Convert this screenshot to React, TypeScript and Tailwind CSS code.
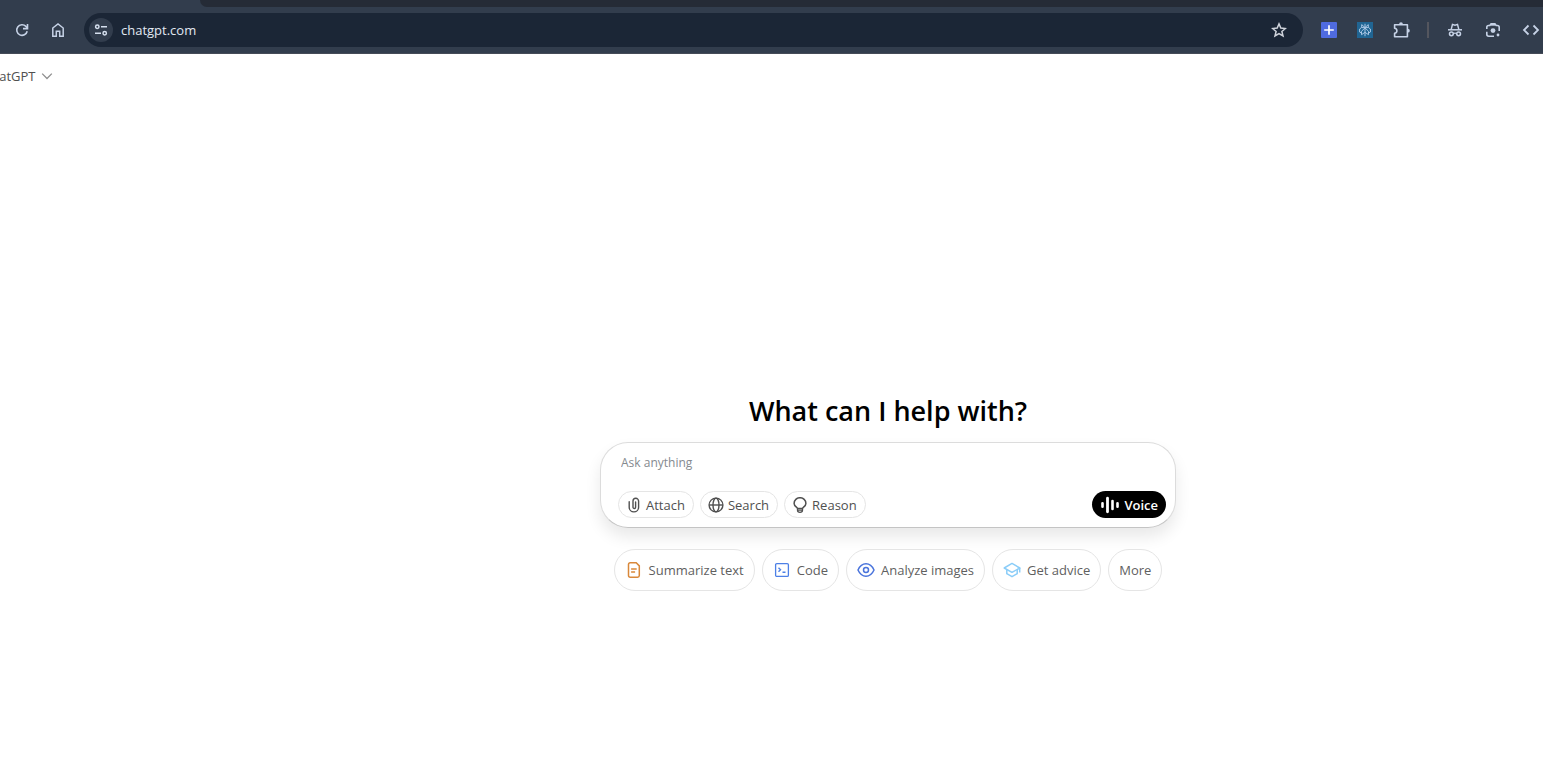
import type { ReactNode } from "react";

type IconProps = { className?: string };

const Svg = ({ size, box, className, children }: { size: number; box: string; className?: string; children: ReactNode }) => (
  <svg
    width={size}
    height={size}
    viewBox={box}
    fill="none"
    stroke="currentColor"
    className={`shrink-0 ${className ?? ""}`}
    aria-hidden="true"
  >
    {children}
  </svg>
);

const ReloadIcon = () => (
  <Svg size={16} box="0 0 16 16">
    <path d="M13.2 9.2A5.3 5.3 0 1 1 11.9 4.4L13.4 6" strokeWidth="1.6" />
    <path d="M13.5 2v4.6H9" strokeWidth="1.6" />
  </Svg>
);

const HomeIcon = () => (
  <Svg size={16} box="0 0 16 16">
    <path d="M2.8 6 8 2l5.2 4v8.2H9.7V9.3H6.3v4.9H2.8Z" strokeWidth="1.5" />
  </Svg>
);

const TuneIcon = () => (
  <Svg size={14} box="0 0 14 14">
    <circle cx="3.3" cy="3.8" r="1.7" strokeWidth="1.5" />
    <circle cx="10.7" cy="10.2" r="1.7" strokeWidth="1.5" />
    <path d="M7 3.8h6M1 10.2h6" strokeWidth="1.6" />
  </Svg>
);

const StarIcon = () => (
  <Svg size={16} box="0 0 16 16">
    <path d="m8 1.9 1.8 4.2 4.6.4-3.5 3 1.100 4.500L8 11.600 4 14l1.100-4.500-3.500-3 4.600-.4Z" strokeWidth="1.5" />
  </Svg>
);

const PuzzleIcon = () => (
  <Svg size={18} box="0 0 18 18">
    <path d="M2.600 3.700h12.800v12H2.600v-3.500c1.500-.2 2.300-1.100 2.300-2.500s-.8-2.300-2.300-2.500Z" strokeWidth="1.6" strokeLinejoin="round" />
    <path d="M7.100 3.200a1.900 1.900 0 0 1 3.800 0ZM15.900 7.800a1.900 1.900 0 0 1 0 3.800Z" fill="currentColor" stroke="none" />
  </Svg>
);

const IncognitoIcon = () => (
  <Svg size={16} box="0 0 16 16">
    <path d="M1 7.800h14" strokeWidth="1.5" />
    <path d="M4.200 7.400 5.500 2.400l2.500.7 2.500-.7 1.300 5" strokeWidth="1.5" />
    <circle cx="4.400" cy="11.800" r="1.900" strokeWidth="1.5" />
    <circle cx="11.600" cy="11.800" r="1.900" strokeWidth="1.5" />
    <path d="M6.300 11.500q1.700-.8 3.400 0" strokeWidth="1.300" />
  </Svg>
);

const LensIcon = () => (
  <Svg size={16} box="0 0 16 16">
    <path d="M1.800 7V5.200q0-1.700 1.700-1.700h1.300l1.300-1.700h3.800l1.300 1.700h1.300q1.700 0 1.700 1.700V9M1.800 9.700v2.600q0 1.900 1.900 1.900H9" strokeWidth="1.6" />
    <path d="M5.600 2.800h4.800" strokeWidth="1.800" />
    <circle cx="8" cy="8.600" r="2.400" fill="currentColor" stroke="none" />
    <circle cx="13" cy="13" r="1.400" fill="currentColor" stroke="none" />
  </Svg>
);

const BracketsIcon = () => (
  <Svg size={18} box="0 0 18 18">
    <path d="M6.500 4.500 2 9l4.500 4.500M11.500 4.500 16 9l-4.500 4.500" strokeWidth="1.800" />
  </Svg>
);

const PlusTile = () => (
  <Svg size={16} box="0 0 16 16">
    <rect width="16" height="16" rx="1" fill="#4f6be0" stroke="none" />
    <path d="M8 3.200v9.600M3.200 8h9.600" stroke="#fff" strokeWidth="1.700" />
  </Svg>
);

const BurstTile = () => (
  <Svg size={16} box="0 0 16 16">
    <rect width="16" height="16" fill="#206593" stroke="none" />
    <path
      d="M8 1.800v12.400M8 5.600 4.700 2.600v3M8 5.600l3.300-3v3M4.400 5.600h7.200l1.800 1.400v3l-1.900 1M4.400 5.600 2.600 7v3l1.900 1M8 5.900 4.500 9.300v3.400L8 10.300M8 5.900l3.500 3.400v3.400L8 10.300"
      stroke="#a9c6e4"
      strokeWidth="1"
    />
  </Svg>
);

const ChevronIcon = ({ className }: IconProps) => (
  <Svg size={12} box="0 0 12 12" className={className}>
    <path d="m1.200 3.600 4.800 4.900 4.800-4.900" strokeWidth="1.300" />
  </Svg>
);

const ClipIcon = () => (
  <Svg size={16} box="0 0 16 16">
    <path
      d="M3.200 4.800v5.400a4.700 4.700 0 0 0 9.400 0V4.100a2.800 2.800 0 0 0-5.600 0v6.100a1.300 1.300 0 0 0 2.600 0V5"
      strokeWidth="1.400"
      strokeLinecap="round"
    />
  </Svg>
);

const GlobeIcon = () => (
  <Svg size={16} box="0 0 16 16">
    <circle cx="8" cy="8" r="6.900" strokeWidth="1.400" />
    <ellipse cx="8" cy="8" rx="3" ry="6.900" strokeWidth="1.400" />
    <path d="M1.200 8h13.600" strokeWidth="1.400" />
  </Svg>
);

const BulbIcon = () => (
  <Svg size={16} box="0 0 16 16">
    <path d="M5.500 11.400C5.300 10.300 2.100 9.400 2.100 6.400a5.900 5.700 0 0 1 11.800 0c0 3-3.200 3.900-3.400 5Z" strokeWidth="1.500" />
    <path d="M5.500 11.400v1.900q0 2 2.500 2t2.500-2v-1.900M5.700 13.200h4.600" strokeWidth="1.300" />
  </Svg>
);

const VoiceIcon = () => (
  <Svg size={18} box="0 0 18 18">
    <path d="M1.500 7.300v3.400M11.500 5v8M16.500 7.300v3.400" strokeWidth="2.600" strokeLinecap="round" />
    <path d="M6.500 2.200v13.600" strokeWidth="2.800" strokeLinecap="round" />
  </Svg>
);

const DocIcon = () => (
  <Svg size={18} box="0 0 18 18" className="text-[#d9883a]">
    <path d="M3.500 3.500q0-1.700 1.700-1.700h6l3.100 3.100v9.600q0 1.700-1.700 1.700H5.200q-1.700 0-1.700-1.700Z" strokeWidth="1.500" />
    <path d="M6.100 8h5.600M6.100 11h4" strokeWidth="1.400" />
  </Svg>
);

const TerminalIcon = () => (
  <Svg size={18} box="0 0 18 18" className="text-[#4d80e6]">
    <rect x="2.600" y="2.600" width="12.800" height="12.800" rx="1.200" strokeWidth="1.300" />
    <path d="m5.500 6.800 2 2-2 2M9.500 11.200h3" strokeWidth="1.400" />
  </Svg>
);

const EyeIcon = () => (
  <Svg size={18} box="0 0 18 18" className="text-[#4a74dc]">
    <path d="M1 9c1.800-4 4.700-6.200 8-6.200S15.200 5 17 9c-1.800 4-4.700 6.200-8 6.200S2.800 13 1 9Z" strokeWidth="1.500" />
    <circle cx="9" cy="9" r="2.500" strokeWidth="1.500" />
  </Svg>
);

const CapIcon = () => (
  <Svg size={18} box="0 0 18 18" className="text-[#8bcdf8]">
    <path d="m1.200 7 7.800-4.600L16.800 7 9 11.300Z" strokeWidth="1.500" strokeLinejoin="round" />
    <path d="M3.800 8.700v4L9 15.700l5.200-3v-4M16.700 7v4.500" strokeWidth="1.500" strokeLinejoin="round" />
  </Svg>
);

const ToolbarButton = ({ label, children }: { label: string; children: ReactNode }) => (
  <button type="button" aria-label={label} className="flex size-9 shrink-0 items-center justify-center text-[#c6d2e6]">
    {children}
  </button>
);

const Label = ({ children }: { children: ReactNode }) => <span className="pt-0.5">{children}</span>;

const tools = [
  { label: "Attach", icon: <ClipIcon /> },
  { label: "Search", icon: <GlobeIcon /> },
  { label: "Reason", icon: <BulbIcon /> },
];

const suggestions = [
  { label: "Summarize text", icon: <DocIcon /> },
  { label: "Code", icon: <TerminalIcon /> },
  { label: "Analyze images", icon: <EyeIcon /> },
  { label: "Get advice", icon: <CapIcon /> },
  { label: "More", icon: null },
];

function BrowserChrome() {
  return (
    <header className="bg-[#323d4d]">
      <div className="flex h-[7px] pl-[200px]">
        <div className="flex-1 rounded-bl-lg bg-[#252b36]" />
      </div>
      <div className="flex h-[47px] items-center border-b border-[#454b57] pl-1">
        <ToolbarButton label="Reload"><ReloadIcon /></ToolbarButton>
        <ToolbarButton label="Home"><HomeIcon /></ToolbarButton>
        <div className="ml-2 flex h-[34px] min-w-0 flex-1 items-center rounded-full bg-[#1b2636] pl-[5px] pr-4">
          <button type="button" aria-label="Site information" className="flex size-6 shrink-0 items-center justify-center rounded-full bg-[#323d4d] text-[#d5dfee]">
            <TuneIcon />
          </button>
          <input
            aria-label="Address"
            defaultValue="chatgpt.com"
            className="ml-2 min-w-0 flex-1 bg-transparent pt-0.5 text-[13px] text-[#e2e8f2] outline-none"
          />
          <button type="button" aria-label="Bookmark this page" className="text-[#d0d4dc]"><StarIcon /></button>
        </div>
        <div className="flex w-60 shrink-0 items-center overflow-hidden pl-2">
          <ToolbarButton label="Add"><PlusTile /></ToolbarButton>
          <ToolbarButton label="Perplexity"><BurstTile /></ToolbarButton>
          <ToolbarButton label="Extensions"><PuzzleIcon /></ToolbarButton>
          <div className="mx-2 h-4 w-0.5 shrink-0 bg-[#54565e]" />
          <div className="flex gap-0.5">
            <ToolbarButton label="Incognito"><IncognitoIcon /></ToolbarButton>
            <ToolbarButton label="Lens"><LensIcon /></ToolbarButton>
            <ToolbarButton label="Developer tools"><BracketsIcon /></ToolbarButton>
          </div>
        </div>
      </div>
    </header>
  );
}

export default function App() {
  return (
    <div className="flex min-h-screen flex-col overflow-hidden bg-white font-['Open_Sans','Noto_Sans',sans-serif]">
      <BrowserChrome />
      <nav className="flex h-11 items-center">
        <button type="button" className="-ml-[17px] flex items-center gap-1.5 text-[13px] font-medium text-[#505050]">
          <Label>ChatGPT</Label>
          <ChevronIcon className="text-[#8f8f8f]" />
        </button>
      </nav>
      <main className="flex flex-1 flex-col items-center pl-[233px] pt-[293px]">
        <h1 className="text-[27px] leading-10 font-semibold text-black">What can I help with?</h1>
        <form
          className="mt-[11px] flex w-full max-w-xl flex-col rounded-[28px] border border-[#dcdcdc] border-b-[#c4c4c4] bg-white pt-[9px] pr-[9px] pb-[9px] pl-[17px] shadow-[0_9px_16px_rgba(0,0,0,0.09)]"
          onSubmit={(e) => e.preventDefault()}
        >
          <input
            aria-label="Ask anything"
            placeholder="Ask anything"
            className="h-5 w-full bg-transparent px-[3px] text-xs text-black outline-none placeholder:text-[#858a8f]"
          />
          <div className="mt-[19px] flex gap-1.5">
            {tools.map((t) => (
              <button key={t.label} type="button" className="flex h-[27px] items-center gap-1 rounded-full border border-[#e5e5e5] pr-2 pl-[7px] text-[13px] font-medium text-[#505050]">
                {t.icon}
                <Label>{t.label}</Label>
              </button>
            ))}
            <button type="button" className="ml-auto flex h-[27px] items-center gap-[5px] rounded-full bg-black pr-2 pl-[9px] text-[13px] font-semibold text-white">
              <VoiceIcon />
              <Label>Voice</Label>
            </button>
          </div>
        </form>
        <div className="mt-[21px] flex gap-[7px]">
          {suggestions.map((s) => (
            <button key={s.label} type="button" className="flex h-[42px] items-center gap-1.5 rounded-full border border-[#e5e5e5] px-2.5 text-[13px] text-[#5f5f5f]">
              {s.icon}
              <Label>{s.label}</Label>
            </button>
          ))}
        </div>
      </main>
    </div>
  );
}
